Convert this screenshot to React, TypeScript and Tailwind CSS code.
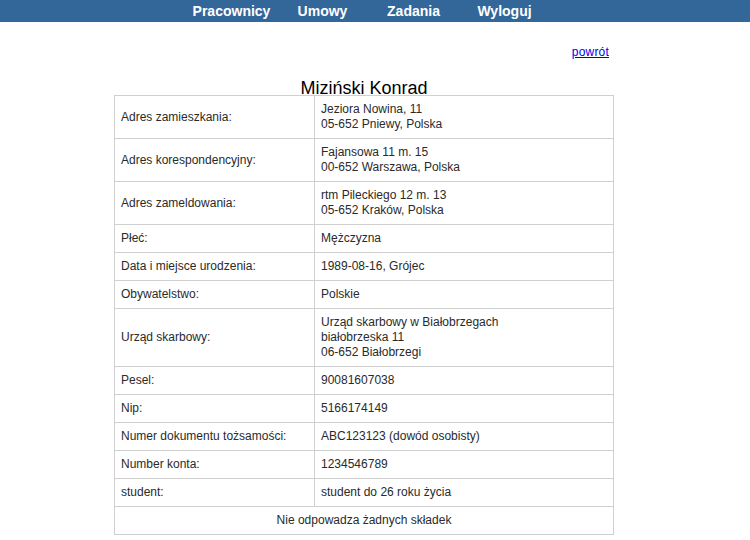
import React from 'react';

const menu = ['Pracownicy', 'Umowy', 'Zadania', 'Wyloguj'];

const rows: { label: string; value: string[] }[] = [
  { label: 'Adres zamieszkania:', value: ['Jeziora Nowina, 11', '05-652 Pniewy, Polska'] },
  { label: 'Adres korespondencyjny:', value: ['Fajansowa 11 m. 15', '00-652 Warszawa, Polska'] },
  { label: 'Adres zameldowania:', value: ['rtm Pileckiego 12 m. 13', '05-652 Kraków, Polska'] },
  { label: 'Płeć:', value: ['Mężczyzna'] },
  { label: 'Data i miejsce urodzenia:', value: ['1989-08-16, Grójec'] },
  { label: 'Obywatelstwo:', value: ['Polskie'] },
  { label: 'Urząd skarbowy:', value: ['Urząd skarbowy w Białobrzegach', 'białobrzeska 11', '06-652 Białobrzegi'] },
  { label: 'Pesel:', value: ['90081607038'] },
  { label: 'Nip:', value: ['5166174149'] },
  { label: 'Numer dokumentu tożsamości:', value: ['ABC123123 (dowód osobisty)'] },
  { label: 'Number konta:', value: ['1234546789'] },
  { label: 'student:', value: ['student do 26 roku życia'] },
];

export default function App() {
  return (
    <div className="min-h-[540px] bg-white font-['Liberation_Sans',Arial,sans-serif]">
      <nav className="h-[22px] bg-[#336699] flex justify-center pr-[14px]">
        {menu.map((item) => (
          <a key={item} href="#" className="w-[91px] text-center text-[14px] leading-[22px] font-bold text-white">
            {item}
          </a>
        ))}
      </nav>

      <div className="flex justify-center pr-[22px] pt-[23px]">
        <div className="w-[500px]">
          <div className="text-right pr-[5px] h-[14px] text-[12px] leading-[14px]">
            <a href="#" className="text-[#0000ee] underline tracking-[0.2px]">powrót</a>
          </div>
          <h1 className="mt-[22px] h-[14px] text-center text-[18px] leading-[14px] text-black">Miziński Konrad</h1>
          <table className="w-[500px] table-fixed border-collapse text-[12px] leading-[15px] text-[#2a2a2a]">
            <colgroup>
              <col className="w-[200px]" />
              <col />
            </colgroup>
            <tbody>
              {rows.map((row) => (
                <tr key={row.label}>
                  <td className="border border-[#d0d0d0] px-[6px] py-[6px] align-middle">{row.label}</td>
                  <td className="border border-[#d0d0d0] px-[6px] py-[6px] align-middle">
                    {row.value.map((line) => (
                      <div key={line}>{line}</div>
                    ))}
                  </td>
                </tr>
              ))}
              <tr>
                <td colSpan={2} className="border border-[#d0d0d0] px-[6px] py-[6px] text-center">
                  Nie odpowadza żadnych składek
                </td>
              </tr>
            </tbody>
          </table>
        </div>
      </div>
    </div>
  );
}
